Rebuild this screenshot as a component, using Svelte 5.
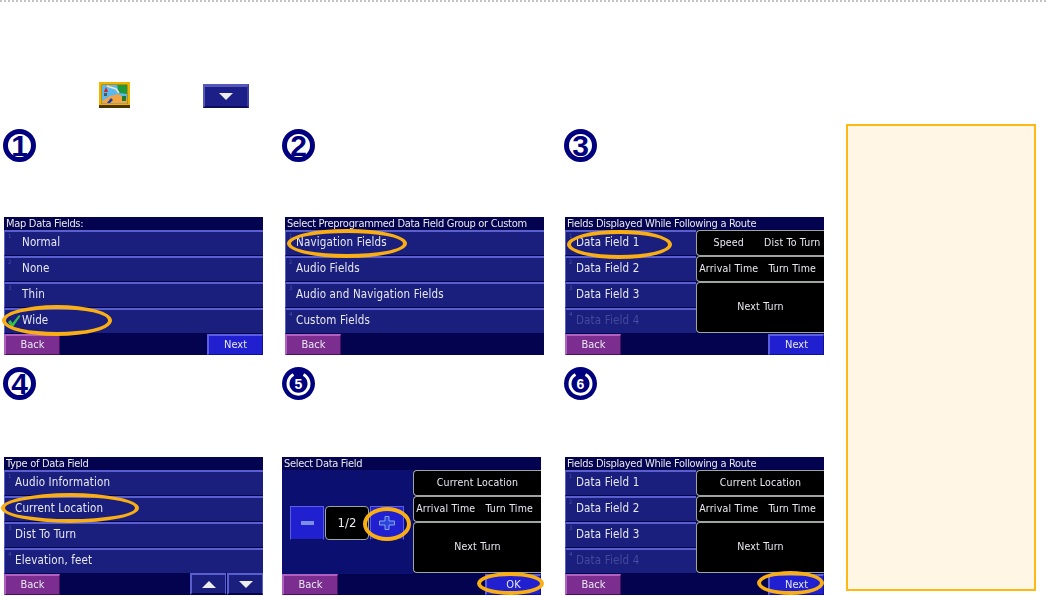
<script>
  const rows1 = ['Normal', 'None', 'Thin', 'Wide'];
  const rows2 = ['Navigation Fields', 'Audio Fields', 'Audio and Navigation Fields', 'Custom Fields'];
  const rows4 = ['Audio Information', 'Current Location', 'Dist To Turn', 'Elevation, feet'];
  const dataRows = ['Data Field 1', 'Data Field 2', 'Data Field 3', 'Data Field 4'];
</script>

{#snippet badge(n)}
  <svg class="badge" viewBox="0 0 33 33" width="33" height="33">
    <circle cx="16.5" cy="16.5" r="14" fill="#fff" stroke="#00007f" stroke-width="5" />
    <text x="16.5" y="27" text-anchor="middle" class="badge-num">{n}</text>
  </svg>
{/snippet}

<!-- 5 and 6 print as a filled disc with a pale open ring in the source -->
{#snippet badgeSolid(n)}
  <svg class="badge" viewBox="0 0 33 33" width="33" height="33">
    <circle cx="16.5" cy="16.5" r="16.5" fill="#00007f" />
    <path d="M11.5 7.5 A10.5 10.5 0 1 0 21.5 7.5" fill="none" stroke="#fff" stroke-width="3" />
    <text x="16.5" y="21.5" text-anchor="middle" class="badge-small">{n}</text>
  </svg>
{/snippet}

{#snippet list(items, disableLast, indented)}
  <div class="list">
    {#each items as item, i}
      <div class="row" class:off={disableLast && i === 3} class:indented>
        <span class="idx">{i + 1}</span>
        <span class="row-label">{item}</span>
      </div>
    {/each}
  </div>
{/snippet}

{#snippet panels(top)}
  <div class="panels">
    {#if top.length > 1}
      <div class="panel split"><span>{top[0]}</span><span>{top[1]}</span></div>
    {:else}
      <div class="panel">{top[0]}</div>
    {/if}
    <div class="panel split"><span>Arrival Time</span><span>Turn Time</span></div>
    <div class="panel big">Next Turn</div>
  </div>
{/snippet}

<div class="page">
  <div class="rule"></div>
  <div class="body">
    <main>
      <div class="intro">
        <svg class="map-icon" viewBox="0 0 32 26" width="32" height="26">
          <rect x="0" y="0" width="31" height="25" fill="#efb400" />
          <rect x="0" y="23" width="31" height="3" fill="#4a3300" />
          <rect x="2.5" y="2.5" width="26" height="19.5" fill="#8a6a10" />
          <rect x="3" y="3" width="25" height="18.5" fill="#58b8f2" />
          <path d="M3 21.5 L3 19 L11 14 L19 12 L28 17 L28 21.5 Z" fill="#f2a544" />
          <path d="M18 3 H28 V12 L20 11 Z" fill="#1e9a3c" />
          <path d="M8 4 L17 7 L20 11" fill="none" stroke="#f6e4bc" stroke-width="1.5" />
          <path d="M5 10 L7 5 L9 10 Z" fill="#d02020" />
          <rect x="5" y="11" width="3" height="3" fill="#555" />
          <path d="M8 21 L12 16 L14 18 L11 21 Z" fill="#1a3ab0" />
          <rect x="23" y="14" width="4" height="5" fill="#1c7a30" />
        </svg>
        <div class="arrow-btn"><span class="tri-down"></span></div>
      </div>

      <div class="steps">
        <section class="step">
          {@render badge(1)}
          <div class="screen">
            <div class="title">Map Data Fields:</div>
            {@render list(rows1, false, true)}
            <svg class="check" viewBox="0 0 14 14" width="14" height="14">
              <path d="M1 8 L3.5 6 L5.5 9 L12 1 L13.5 2 L6 13 L4.5 13 Z" fill="#35c04a" />
            </svg>
            <div class="bottom"><div class="back">Back</div><div class="next">Next</div></div>
            <div class="oval" style="left:-2px;top:88px;width:110px;height:31px"></div>
          </div>
        </section>

        <section class="step">
          {@render badge(2)}
          <div class="screen wide-offset">
            <div class="title">Select Preprogrammed Data Field Group or Custom</div>
            {@render list(rows2, false, false)}
            <div class="bottom"><div class="back">Back</div></div>
            <div class="oval" style="left:2px;top:12px;width:120px;height:29px"></div>
          </div>
        </section>

        <section class="step">
          {@render badge(3)}
          <div class="screen">
            <div class="title">Fields Displayed While Following a Route</div>
            <div class="split-body">
              {@render list(dataRows, true, false)}
              {@render panels(['Speed', 'Dist To Turn'])}
            </div>
            <div class="bottom"><div class="back">Back</div><div class="next">Next</div></div>
            <div class="oval" style="left:2px;top:13px;width:105px;height:29px"></div>
          </div>
        </section>

        <section class="step">
          {@render badge(4)}
          <div class="screen">
            <div class="title">Type of Data Field</div>
            {@render list(rows4, false, false)}
            <div class="bottom">
              <div class="back">Back</div>
              <div class="arrows">
                <div class="arrow-small"><span class="tri-up"></span></div>
                <div class="arrow-small"><span class="tri-down"></span></div>
              </div>
            </div>
            <div class="oval" style="left:-3px;top:36px;width:138px;height:30px"></div>
          </div>
        </section>

        <section class="step">
          {@render badgeSolid(5)}
          <div class="screen no-offset">
            <div class="title">Select Data Field</div>
            <div class="split-body picker">
              <div class="stepper">
                <div class="step-btn"><span class="minus"></span></div>
                <div class="count">1/2</div>
                <div class="step-btn">
                  <svg viewBox="0 0 16 14" width="16" height="14">
                    <path d="M6 .5 H10 V5 H15.5 V9 H10 V13.5 H6 V9 H.5 V5 H6 Z" fill="#2a44dc" stroke="#8aa2ea" />
                  </svg>
                </div>
              </div>
              {@render panels(['Current Location'])}
            </div>
            <div class="bottom"><div class="back">Back</div><div class="next">OK</div></div>
            <div class="oval" style="left:81px;top:50px;width:48px;height:34px"></div>
            <div class="oval" style="left:195px;top:115px;width:67px;height:23px"></div>
          </div>
        </section>

        <section class="step">
          {@render badgeSolid(6)}
          <div class="screen">
            <div class="title">Fields Displayed While Following a Route</div>
            <div class="split-body">
              {@render list(dataRows, true, false)}
              {@render panels(['Current Location'])}
            </div>
            <div class="bottom"><div class="back">Back</div><div class="next">Next</div></div>
            <div class="oval" style="left:192px;top:114px;width:67px;height:24px"></div>
          </div>
        </section>
      </div>
    </main>
    <aside class="note"></aside>
  </div>
</div>

<style>
  :global(body) {
    margin: 0;
    background: #fff;
  }

  .page {
    width: 1046px;
    height: 596px;
    overflow: hidden;
    font-family: "DejaVu Sans", sans-serif;
  }

  .rule {
    height: 2px;
    background: repeating-linear-gradient(90deg, #c4c4c4 0 2px, #fff 2px 4px);
  }

  .body {
    display: flex;
  }

  main {
    width: 846px;
    padding: 80px 0 0 3px;
    box-sizing: border-box;
  }

  .note {
    width: 186px;
    height: 463px;
    margin-top: 122px;
    border: 2px solid #fdb813;
    background: #fff6e5;
  }

  /* Intro line with inline icons */
  .intro {
    display: flex;
    align-items: flex-start;
    height: 47px;
    padding-left: 96px;
  }

  .map-icon {
    display: block;
  }

  .arrow-btn {
    display: flex;
    align-items: center;
    justify-content: center;
    box-sizing: border-box;
    width: 46px;
    height: 24px;
    margin: 2px 0 0 72px;
    background: #1c1f88;
    border: 2px solid #5558b8;
    border-top-width: 3px;
    border-right-color: #3a3d9c;
    border-bottom-color: #0c0e5c;
  }

  .tri-down {
    width: 0;
    height: 0;
    border-left: 7px solid transparent;
    border-right: 7px solid transparent;
    border-top: 7px solid #eee;
  }

  .tri-up {
    width: 0;
    height: 0;
    border-left: 7px solid transparent;
    border-right: 7px solid transparent;
    border-bottom: 7px solid #eee;
  }

  /* Steps */
  .steps {
    display: grid;
    grid-template-columns: 279px 282px 260px;
    grid-template-rows: 226px 228px;
    row-gap: 12px;
  }

  .step {
    display: flex;
    flex-direction: column;
    justify-content: space-between;
  }

  .badge {
    display: block;
  }

  .badge-num {
    font-family: "Liberation Sans", sans-serif;
    font-size: 30px;
    font-weight: 700;
    fill: #00007f;
  }

  .badge-small {
    font-family: "Liberation Sans", sans-serif;
    font-size: 14px;
    font-weight: 700;
    fill: #fff;
  }

  /* Device screens */
  .screen {
    position: relative;
    width: 259px;
    height: 138px;
    margin-left: 1px;
    background: #03034f;
    color: #e8e8f0;
    font-size: 11.5px;
    font-stretch: condensed;
    line-height: 1;
    filter: blur(0.3px);
  }

  .wide-offset {
    margin-left: 3px;
  }

  .no-offset {
    margin-left: 0;
  }

  .title {
    height: 13px;
    padding: 1px 0 0 2px;
    box-sizing: border-box;
    font-size: 11px;
    letter-spacing: -0.3px;
    white-space: nowrap;
  }

  .list {
    display: flex;
    flex-direction: column;
    flex: 1;
  }

  .row {
    position: relative;
    display: flex;
    align-items: center;
    box-sizing: border-box;
    height: 26px;
    padding: 0 0 1px 10px;
    background: #1a1f7e;
    border-top: 2px solid #5a5fd0;
    border-left: 1px solid #5a5fd0;
    border-bottom: 1px solid #03034f;
    letter-spacing: 0.15px;
  }

  .row.indented {
    padding-left: 17px;
  }

  .row.off {
    color: #454a9c;
  }

  .idx {
    position: absolute;
    left: 3px;
    top: 1px;
    font-size: 6px;
    color: #4a4fa8;
  }

  .split-body {
    display: flex;
    height: 104px;
  }

  .split-body .list {
    flex: 0 0 131px;
  }

  .panels {
    display: flex;
    flex-direction: column;
    flex: 1;
  }

  .panel {
    display: flex;
    align-items: center;
    justify-content: center;
    box-sizing: border-box;
    height: 26px;
    padding-bottom: 1px;
    background: #000;
    border: 1px solid #9ea6a0;
    border-right: none;
    border-radius: 4px 0 0 4px;
    font-size: 10.5px;
    letter-spacing: 0.2px;
    white-space: nowrap;
  }

  .panel.split {
    display: grid;
    grid-template-columns: 1fr 1fr;
    justify-items: center;
  }

  .panel.big {
    height: 51px;
    padding-bottom: 3px;
  }

  .picker .panels {
    flex: 0 0 128px;
  }

  .stepper {
    display: flex;
    align-items: center;
    flex: 0 0 131px;
    gap: 1px;
    padding: 1px 0 0 8px;
    box-sizing: border-box;
    background: #0a0f70;
  }

  .step-btn {
    display: flex;
    align-items: center;
    justify-content: center;
    box-sizing: border-box;
    width: 34px;
    height: 34px;
    background: #2020d0;
    border: 1px solid #5a5fe0;
    border-bottom-color: #0a0f60;
  }

  .minus {
    width: 13px;
    height: 4px;
    background: #7a90e0;
  }

  .count {
    display: flex;
    align-items: center;
    justify-content: center;
    box-sizing: border-box;
    width: 44px;
    height: 34px;
    background: #000;
    border: 1px solid #9ea6a0;
    border-radius: 4px;
    font-size: 13px;
  }

  .bottom {
    position: absolute;
    left: 0;
    right: 0;
    bottom: 0;
    height: 21px;
    display: flex;
    justify-content: space-between;
    align-items: flex-end;
  }

  .back,
  .next {
    display: flex;
    align-items: center;
    justify-content: center;
    box-sizing: border-box;
    width: 56px;
    height: 21px;
    padding-bottom: 1px;
    border: 1px solid;
    border-width: 2px 1px 1px 2px;
    font-size: 11px;
  }

  .back {
    background: #7b2d90;
    border-color: #b060c0 #4a1060 #4a1060 #b060c0;
  }

  .next {
    background: #2020d0;
    border-color: #5a5fe0 #1010a0 #1010a0 #5a5fe0;
  }

  .arrows {
    display: flex;
    gap: 1px;
  }

  .arrow-small {
    display: flex;
    align-items: center;
    justify-content: center;
    box-sizing: border-box;
    width: 36px;
    height: 22px;
    background: #1a1f7e;
    border: 2px solid #5a5fd0;
    border-right-width: 1px;
    border-bottom-color: #03034f;
  }

  .check {
    position: absolute;
    left: 3px;
    top: 97px;
  }

  /* Callout rings */
  .oval {
    position: absolute;
    box-sizing: border-box;
    border: 4px solid #f9ae14;
    border-radius: 50%;
  }
</style>
